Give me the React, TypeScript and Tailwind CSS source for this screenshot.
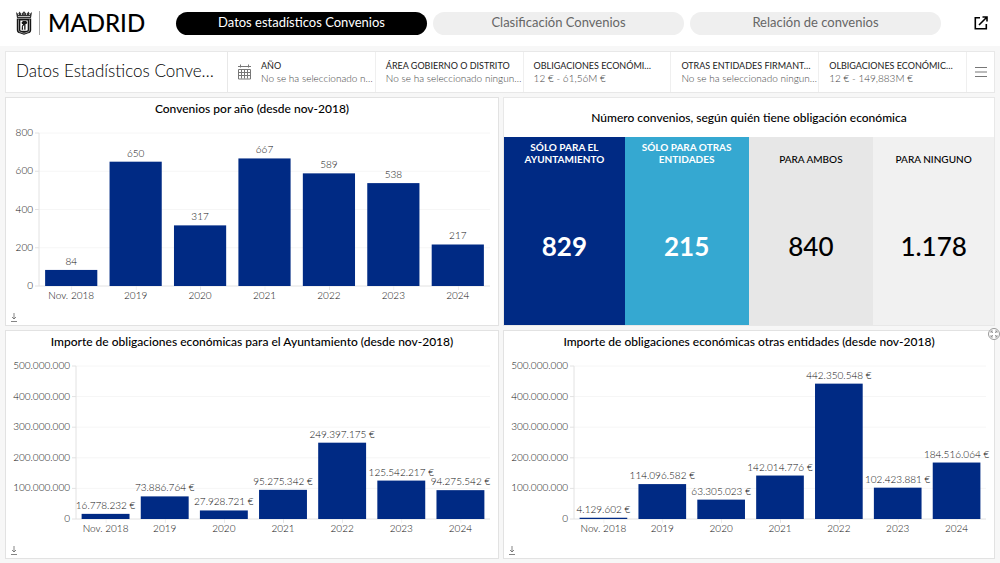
import clsx from "clsx";

type Datum = { label: string; value: number; text: string };

const tabs = ["Datos estadísticos Convenios", "Clasificación Convenios", "Relación de convenios"];

const filters = [
  { name: "AÑO", value: "No se ha seleccionado n…", calendar: true },
  { name: "ÁREA GOBIERNO O DISTRITO", value: "No se ha seleccionado ningun…" },
  { name: "OBLIGACIONES ECONÓMI…", value: "12 € - 61,56M €" },
  { name: "OTRAS ENTIDADES FIRMANT…", value: "No se ha seleccionado ningun…" },
  { name: "OLBIGACIONES ECONÓMIC…", value: "12 € - 149,883M €" },
];

const totals = [
  { name: "SÓLO PARA EL AYUNTAMIENTO", value: "829", tone: "bg-[#002a84] text-white font-bold" },
  { name: "SÓLO PARA OTRAS ENTIDADES", value: "215", tone: "bg-[#35a8d1] text-white font-bold" },
  { name: "PARA AMBOS", value: "840", tone: "bg-[#e7e7e7] text-black font-medium" },
  { name: "PARA NINGUNO", value: "1.178", tone: "bg-[#f1f1f1] text-black font-medium" },
];

const convenios: Datum[] = [
  { label: "Nov. 2018", value: 84, text: "84" },
  { label: "2019", value: 650, text: "650" },
  { label: "2020", value: 317, text: "317" },
  { label: "2021", value: 667, text: "667" },
  { label: "2022", value: 589, text: "589" },
  { label: "2023", value: 538, text: "538" },
  { label: "2024", value: 217, text: "217" },
];

const ayuntamiento: Datum[] = [
  { label: "Nov. 2018", value: 16778232, text: "16.778.232 €" },
  { label: "2019", value: 73886764, text: "73.886.764 €" },
  { label: "2020", value: 27928721, text: "27.928.721 €" },
  { label: "2021", value: 95275342, text: "95.275.342 €" },
  { label: "2022", value: 249397175, text: "249.397.175 €" },
  { label: "2023", value: 125542217, text: "125.542.217 €" },
  { label: "2024", value: 94275542, text: "94.275.542 €" },
];

const otras: Datum[] = [
  { label: "Nov. 2018", value: 4129602, text: "4.129.602 €" },
  { label: "2019", value: 114096582, text: "114.096.582 €" },
  { label: "2020", value: 63305023, text: "63.305.023 €" },
  { label: "2021", value: 142014776, text: "142.014.776 €" },
  { label: "2022", value: 442350548, text: "442.350.548 €" },
  { label: "2023", value: 102423881, text: "102.423.881 €" },
  { label: "2024", value: 184516064, text: "184.516.064 €" },
];

const countTicks = ["800", "600", "400", "200", "0"];
const euroTicks = ["500.000.000", "400.000.000", "300.000.000", "200.000.000", "100.000.000", "0"];

const Crest = () => (
  <svg width="16" height="24" viewBox="0 0 16 24" aria-hidden="true">
    <path d="M1 7 0 1l2.2 2L3.5.6 5.4 3 8 .3 10.6 3 12.5.6 13.8 3 16 1l-1 6z" fill="#333" />
    <path d="M2 3.5h1M5 3.5h1M7.5 3h1M10 3.5h1M13 3.5h1M2 5.5h12" stroke="#fff" strokeWidth=".7" />
    <path d="M.8 7.5h14.4V19q0 3-3 3.3L8 23.8l-4.2-1.5Q.8 22 .8 19z" fill="#151515" />
    <path d="M2.5 8.5V19q0 2 2 2.2L8 22.3l3.5-1.1q2-.2 2-2.2V8.5" fill="none" stroke="#bbb" strokeWidth=".7" />
    <path d="M4.3 9.5h7.4v9.2q0 1-1 1H5.3q-1 0-1-1z" fill="#fff" />
    <path d="M5.5 11.5 7 10h3.2l1 1.5-.7 1.5H9.5v5.7H8.200V14l-1.400 1.500.4 3.200H5.700l.2-3.600 1.300-2.100H6z" fill="#151515" />
  </svg>
);

const CalendarIcon = () => (
  <svg width="13" height="16" viewBox="0 0 13 16" fill="none" stroke="#777" aria-hidden="true">
    <path d="M0 2.5h13M.5 5.5h12v9.5H.5zM.5 8.5h12M.5 11.5h12M3.5 5.5v9M6.5 5.5v9M9.5 5.5v9M2.5.5v3M10.5.5v3" />
  </svg>
);

const DownloadButton = () => (
  <button type="button" aria-label="Descargar" className="flex h-3 w-3 items-center justify-center text-[#666]">
    <svg width="6" height="9" viewBox="0 0 6 9" fill="none" stroke="currentColor">
      <path d="M3 0v6M1 4l2 2 2-2M0 8.5h6" strokeWidth=".8" />
    </svg>
  </button>
);

const Plot = ({ data, max, steps }: { data: Datum[]; max: number; steps: number }) => {
  const pitch = 100 / data.length;
  return (
    <svg className="block h-full w-full overflow-visible" role="img">
      {Array.from({ length: steps + 1 }, (_, i) => {
        const y = `${(i * 100) / steps}%`;
        const base = i === steps;
        return (
          <g key={i}>
            <line x1="0" x2="100%" y1={y} y2={y} stroke={base ? "#e2e2e2" : "#f6f6f6"} />
            <line x1="-4" x2="0" y1={y} y2={y} stroke="#e2e2e2" />
          </g>
        );
      })}
      <line x1="0" x2="0" y1="0" y2="100%" stroke="#e2e2e2" />
      {data.map((d, i) => {
        const height = (d.value / max) * 100;
        const center = `${(i + 0.5) * pitch}%`;
        return (
          <g key={d.label}>
            <rect
              x={`${(i + 0.095) * pitch}%`}
              y={`${100 - height}%`}
              width={`${pitch * 0.81}%`}
              height={`${height}%`}
              fill="#002a84"
            />
            <text
              x={center}
              y={`${100 - height}%`}
              dy="-5"
              textAnchor="middle"
              className="fill-[#111] text-[10px] font-light"
            >
              {d.text}
            </text>
            <svg x={center} y="100%" width="1" height="4">
              <rect width="1" height="4" fill="#e2e2e2" />
            </svg>
          </g>
        );
      })}
    </svg>
  );
};

type ChartProps = {
  title: string;
  data: Datum[];
  max: number;
  ticks: string[];
  axisWidth: string;
  className?: string;
};

const ChartCard = ({ title, data, max, ticks, axisWidth, className }: ChartProps) => (
  <section className={clsx("flex min-w-0 flex-col border border-[#e2e2e2] bg-white", className)}>
    <h2 className="text-center text-[12px] leading-[22px] font-medium text-black">{title}</h2>
    <div className="mt-[13px] flex min-h-[120px] flex-1 pr-2">
      <div
        className={clsx(
          "-mt-[9px] -mb-[7px] flex shrink-0 flex-col items-end justify-between pr-1.5 text-[10px] leading-4 font-light text-[#111]",
          axisWidth
        )}
      >
        {ticks.map((tick) => (
          <span key={tick}>{tick}</span>
        ))}
      </div>
      <div className="flex min-w-0 flex-1 flex-col">
        <Plot data={data} max={max} steps={ticks.length - 1} />
        <div className="h-0">
          <div className="grid grid-cols-7 pt-px text-center text-[10px] leading-4 font-light whitespace-nowrap text-[#111]">
            {data.map((d) => (
              <span key={d.label}>{d.label}</span>
            ))}
          </div>
        </div>
      </div>
    </div>
    <div className="mt-[25px] mb-0.5 ml-0.5">
      <DownloadButton />
    </div>
  </section>
);

const Header = () => (
  <header className="flex h-[46px] items-center bg-white pr-3 pl-4">
    <div className="flex w-40 items-center">
      <Crest />
      <span className="ml-[7px] h-6 w-px bg-[#aaa]" />
      <span className="ml-2 text-[24px] leading-6 font-medium text-black">MADRID</span>
    </div>
    <nav className="flex flex-1 gap-1.5">
      {tabs.map((tab, i) => (
        <button
          key={tab}
          type="button"
          className={clsx(
            "h-[23px] flex-1 rounded-full pb-0.5 text-[13px] leading-5",
            i === 0 ? "bg-black text-white" : "bg-[#efefef] text-[#666]"
          )}
        >
          {tab}
        </button>
      ))}
    </nav>
    <a href="#" aria-label="Abrir en una ventana nueva" className="ml-[33px] text-black">
      <svg width="14" height="14" viewBox="0 0 14 14" fill="none" stroke="currentColor" strokeWidth="1.6">
        <path d="M6 1.8H1.3v11h11V8M8.5 1H13v4.5M13 1 5 9" />
      </svg>
    </a>
  </header>
);

const FilterBar = () => (
  <div className="flex h-[42px] border border-[#e8e8e8] bg-white">
    <h1 className="w-[222px] shrink-0 border-r border-[#e8e8e8] pl-2.5 text-[17px] leading-[38px] font-light whitespace-nowrap text-black">
      Datos Estadísticos Conve…
    </h1>
    <div className="grid min-w-0 flex-1 grid-cols-5">
      {filters.map((filter) => (
        <button
          key={filter.name}
          type="button"
          className="flex min-w-0 items-center gap-2.5 border-r border-[#efefef] pl-2.5 text-left whitespace-nowrap"
        >
          {filter.calendar && <CalendarIcon />}
          <span className="flex flex-col">
            <span className="text-[9px] leading-[13px] text-[#222]">{filter.name}</span>
            <span className="text-[10px] leading-[13px] font-light text-[#444]">{filter.value}</span>
          </span>
        </button>
      ))}
    </div>
    <button type="button" aria-label="Menú" className="flex w-[27px] items-center justify-center text-[#777]">
      <svg width="12" height="10" viewBox="0 0 12 10" stroke="currentColor">
        <path d="M0 .5h12M0 5h12M0 9.5h12" />
      </svg>
    </button>
  </div>
);

const TotalsCard = () => (
  <section className="flex min-w-0 flex-col border border-[#e8e8e8] bg-white">
    <h2 className="text-center text-[12px] leading-[39px] font-medium text-black">
      Número convenios, según quién tiene obligación económica
    </h2>
    <div className="grid flex-1 grid-cols-[121fr_124fr_125fr_121fr]">
      {totals.map((total) => (
        <div key={total.name} className={clsx("flex flex-col items-center text-center", total.tone)}>
          <div className="flex h-[42px] items-end justify-center px-3 pb-3.5 text-[10px] leading-3">
            <span className="max-w-24">{total.name}</span>
          </div>
          <div className="flex flex-1 justify-center pt-[51px] text-[26px] leading-8">{total.value}</div>
        </div>
      ))}
    </div>
  </section>
);

export default function App() {
  return (
    <div className="flex min-h-screen flex-col bg-[#f7f7f7] font-['Lato','Open_Sans',sans-serif]">
      <Header />
      <main className="flex flex-1 flex-col gap-1 px-[5px] pt-[5px] pb-1">
        <FilterBar />
        <div className="grid flex-1 grid-cols-[494fr_492fr] grid-rows-2 gap-1">
          <ChartCard
            title="Convenios por año (desde nov-2018)"
            data={convenios}
            max={800}
            ticks={countTicks}
            axisWidth="w-[33px]"
          />
          <TotalsCard />
          <ChartCard
            title="Importe de obligaciones económicas para el Ayuntamiento (desde nov-2018)"
            data={ayuntamiento}
            max={500000000}
            ticks={euroTicks}
            axisWidth="w-[70px]"
          />
          <div className="relative flex min-w-0">
            <ChartCard
              title="Importe de obligaciones económicas otras entidades (desde nov-2018)"
              data={otras}
              max={500000000}
              ticks={euroTicks}
              axisWidth="w-[70px]"
              className="flex-1"
            />
            <button
              type="button"
              aria-label="Ampliar"
              className="absolute -top-0.5 -right-[5px] flex h-3 w-3 items-center justify-center rounded-full border border-[#999] bg-white"
            >
              <svg width="8" height="8" viewBox="0 0 8 8" fill="none" stroke="#888" strokeWidth=".8">
                <path d="M1 3V1h2M1 1l2 2M5 1h2v2M7 1 5 3M1 5v2h2M1 7l2-2M7 5v2H5M7 7 5 5" />
              </svg>
            </button>
          </div>
        </div>
      </main>
    </div>
  );
}
